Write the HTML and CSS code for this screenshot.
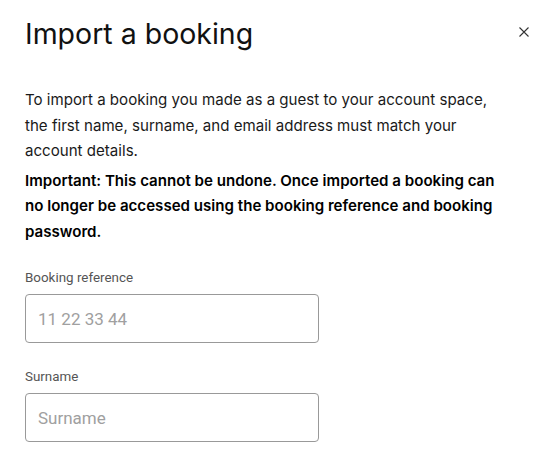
FILE: index.html
```html
<!DOCTYPE html>
<html>
<head>
<meta charset="utf-8">
<link rel="stylesheet" href="styles.css">
</head>
<body>
<div class="modal">
  <div class="header">
    <h1 class="title">Import a booking</h1>
    <button class="close" aria-label="Close">
      <svg width="10" height="10" viewBox="0 0 10 10"><path d="M0.5 0.5L9.5 9.5M9.5 0.5L0.5 9.5" stroke="#333" stroke-width="1.1" fill="none"/></svg>
    </button>
  </div>
  <p class="text">To import a booking you made as a guest to your account space, the first name, surname, and email address must match your account details.</p>
  <p class="text strong">Important: This cannot be undone. Once imported a booking can no longer be accessed using the booking reference and booking password.</p>
  <div class="field">
    <label class="label">Booking reference</label>
    <input class="input" placeholder="11 22 33 44">
  </div>
  <div class="field">
    <label class="label">Surname</label>
    <input class="input" placeholder="Surname">
  </div>
</div>
</body>
</html>
```
FILE: styles.css
```css
html, body { margin: 0; padding: 0; background: #fff; }
body { font-family: Inter, "Noto Sans", sans-serif; color: #111; }
.modal { padding: 16px 18px 0 25px; }
.header { display: flex; justify-content: space-between; align-items: flex-start; }
.title { margin: 0; font-size: 28.5px; font-weight: 400; line-height: 36px; color: #111; }
.close { border: 0; background: none; padding: 0; margin: 11px 0 0 0; width: 10px; height: 10px; display: flex; }
.text { margin: 35px 0 0 0; font-size: 15.1px; line-height: 25.5px; color: #1a1a1a; max-width: 474px; }
.strong { margin-top: 4px; font-weight: 600; color: #000; }
.field { display: flex; flex-direction: column; margin-top: 25px; }
.field + .field { margin-top: 25px; }
.label { font-family: Roboto, sans-serif; font-size: 13.4px; color: #555; margin-bottom: 7px; line-height: 18px; }
.input { box-sizing: border-box; width: 294px; height: 49px; border: 1px solid #999; border-radius: 4px; padding: 0 12px; font-family: Roboto, sans-serif; font-size: 17px; color: #333; outline: none; }
.input::placeholder { color: #a0a0a0; }
```
